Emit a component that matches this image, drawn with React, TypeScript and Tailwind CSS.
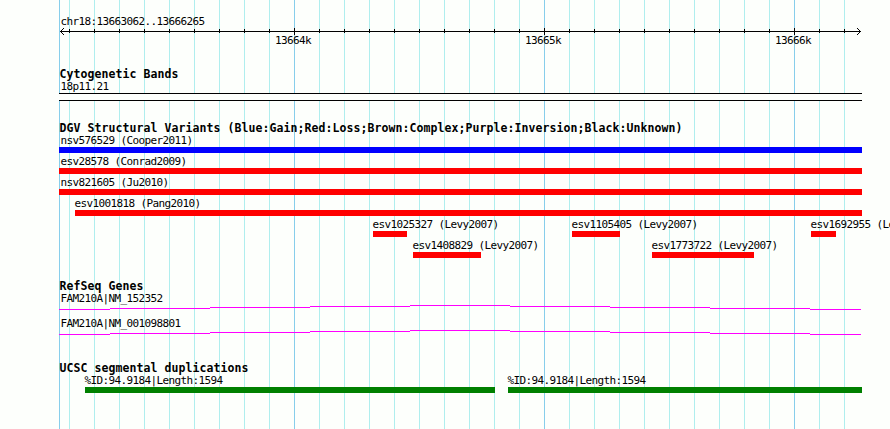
import React from 'react';

interface Feature {
  name: string;
  start: number;
  end: number;
  labelOffset?: number;
}

interface FeatureRow {
  id: string;
  color: string;
  features: Feature[];
}

// Pixel positions are relative to the left edge of the panel
const PANEL_WIDTH = 803;
const gridLines = Array.from({ length: 32 }, (_, i) => 10 + i * 25);
const isMajor = (x: number) => (x - 235) % 250 === 0;

const variantRows: FeatureRow[] = [
  { id: 'cooper', color: 'bg-[#0000ff]', features: [{ name: 'nsv576529 (Cooper2011)', start: 0, end: 803, labelOffset: 1.5 }] },
  { id: 'conrad', color: 'bg-[#ff0000]', features: [{ name: 'esv28578 (Conrad2009)', start: 0, end: 803, labelOffset: 1.5 }] },
  { id: 'ju', color: 'bg-[#ff0000]', features: [{ name: 'nsv821605 (Ju2010)', start: 0, end: 803, labelOffset: 1.5 }] },
  { id: 'pang', color: 'bg-[#ff0000]', features: [{ name: 'esv1001818 (Pang2010)', start: 16, end: 803 }] },
  {
    id: 'levy-a',
    color: 'bg-[#ff0000]',
    features: [
      { name: 'esv1025327 (Levy2007)', start: 314, end: 348 },
      { name: 'esv1105405 (Levy2007)', start: 513, end: 561 },
      { name: 'esv1692955 (Levy2007)', start: 752, end: 777 },
    ],
  },
  {
    id: 'levy-b',
    color: 'bg-[#ff0000]',
    features: [
      { name: 'esv1408829 (Levy2007)', start: 354, end: 422 },
      { name: 'esv1773722 (Levy2007)', start: 593, end: 695 },
    ],
  },
];

const duplicationRow: FeatureRow = {
  id: 'segdup',
  color: 'bg-[#008000]',
  features: [
    { name: '%ID:94.9184|Length:1594', start: 26, end: 436 },
    { name: '%ID:94.9184|Length:1594', start: 449, end: 803 },
  ],
};

const genes = ['FAM210A|NM_152352', 'FAM210A|NM_001098801'];

const Label: React.FC<{ children: React.ReactNode }> = ({ children }) => (
  <span className="block whitespace-pre text-[11px] leading-[13px] tracking-[-0.622px]">{children}</span>
);

const TrackTitle: React.FC<{ children: React.ReactNode }> = ({ children }) => (
  <h2 className="h-[12px] whitespace-pre pl-[0.5px] text-[11.5px] leading-[13px] font-bold tracking-[0.077px]">{children}</h2>
);

const Grid = () => (
  <svg className="absolute inset-0 -z-10" width={PANEL_WIDTH} height={429} shapeRendering="crispEdges">
    <rect x={0} y={0} width={1} height={429} fill="#87ceeb" />
    {gridLines.map((x) => (
      <rect key={x} x={x} y={0} width={1} height={429} fill={isMajor(x) ? '#87ceeb' : '#afeeee'} />
    ))}
  </svg>
);

const Ruler = () => (
  <svg className="block" width={PANEL_WIDTH} height={8} shapeRendering="crispEdges">
    <rect x={1} y={4} width={801} height={1} />
    {/* arrow heads */}
    {[1, 2, 3].map((d) => (
      <React.Fragment key={d}>
        <rect x={1 + d} y={4 - d} width={1} height={1} />
        <rect x={1 + d} y={4 + d} width={1} height={1} />
        <rect x={801 - d} y={4 - d} width={1} height={1} />
        <rect x={801 - d} y={4 + d} width={1} height={1} />
      </React.Fragment>
    ))}
    {gridLines.map((x) => (
      <rect key={x} x={x} y={isMajor(x) ? 1 : 2} width={1} height={isMajor(x) ? 7 : 4} />
    ))}
  </svg>
);

const Features: React.FC<{ row: FeatureRow }> = ({ row }) => (
  <div className="grid h-[21px]">
    {row.features.map((f) => (
      <div key={f.start} className="col-start-1 row-start-1 w-0" style={{ marginLeft: f.start }}>
        <div style={{ marginLeft: f.labelOffset ?? -0.5 }}>
          <Label>{f.name}</Label>
        </div>
        <div className={`h-[6px] ${row.color}`} style={{ width: f.end - f.start }} />
      </div>
    ))}
  </div>
);

// Intron line, drawn as a shallow stepped hat
const Intron = () => (
  <svg className="block" width={PANEL_WIDTH} height={5} shapeRendering="crispEdges" fill="#ff00ff">
    {[4, 3, 2, 1, 0, 1, 2, 3, 4].map((y, i) => {
      const start = i === 0 ? 0 : 51 + (i - 1) * 100;
      const end = i === 8 ? 802 : 51 + i * 100;
      return <rect key={i} x={start} y={y} width={end - start} height={1} />;
    })}
  </svg>
);

export default function App() {
  return (
    <div className="h-[429px] w-[890px] overflow-hidden bg-[#fdfffc] pl-[59px] font-['DejaVu_Sans_Mono',monospace] text-black">
      <main className="relative isolate h-full w-[803px] pt-[15px]">
        <Grid />

        <header className="h-[53px]">
          <div className="h-[12px] pl-[1.5px]"><Label>chr18:13663062..13666265</Label></div>
          <Ruler />
          <div className="-mt-px flex gap-[214px] pl-[216px]">
            <Label>13664k</Label>
            <Label>13665k</Label>
            <Label>13666k</Label>
          </div>
        </header>

        <section className="h-[54px]">
          <TrackTitle>Cytogenetic Bands</TrackTitle>
          <div className="pl-[1.5px]"><Label>18p11.21</Label></div>
          <div className="h-[8px] border-y border-black bg-[#fdfffc]" />
        </section>

        <section className="h-[158px]">
          <TrackTitle>DGV Structural Variants (Blue:Gain;Red:Loss;Brown:Complex;Purple:Inversion;Black:Unknown)</TrackTitle>
          {variantRows.map((row) => <Features key={row.id} row={row} />)}
        </section>

        <section className="h-[82px]">
          <TrackTitle>RefSeq Genes</TrackTitle>
          {genes.map((gene) => (
            <div key={gene} className="h-[25px]">
              <div className="pl-[1.5px]"><Label>{gene}</Label></div>
              <Intron />
            </div>
          ))}
        </section>

        <section>
          <TrackTitle>UCSC segmental duplications</TrackTitle>
          <Features row={duplicationRow} />
        </section>
      </main>
    </div>
  );
}
